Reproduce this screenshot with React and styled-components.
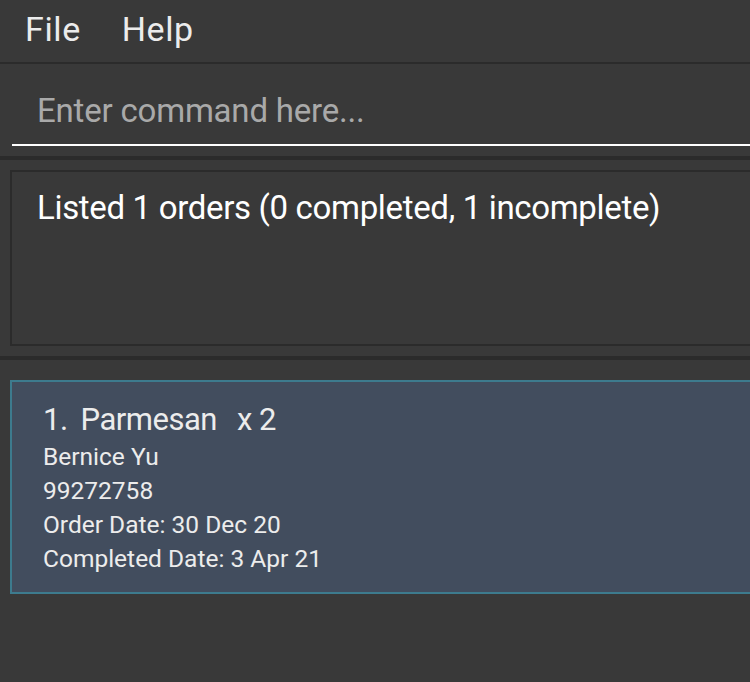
import React from "react";
import styled, { createGlobalStyle } from "styled-components";

const Global = createGlobalStyle`
  html, body { margin: 0; padding: 0; background: #393939; }
  body { font-family: Roboto, "Liberation Sans", sans-serif; overflow: hidden; }
  #root { width: 750px; height: 682px; }
`;

const Window = styled.div`
  width: 750px;
  height: 682px;
  display: flex;
  flex-direction: column;
  background: #393939;
  overflow: hidden;
`;

const MenuBar = styled.div`
  height: 62px;
  box-sizing: border-box;
  display: flex;
  align-items: center;
  padding: 0 0 4px 25px;
  gap: 41px;
  border-bottom: 2px solid #2b2b2b;
  height: 64px;
`;

const MenuItem = styled.span`
  color: #ececec;
  font-size: 34px;
  line-height: 1;
  letter-spacing: 0.6px;
`;

const CommandArea = styled.div`
  display: flex;
  flex-direction: column;
  justify-content: flex-end;
  padding: 0 0 10px 12px;
  border-bottom: 4px solid #2b2b2b;
  box-sizing: border-box;
  height: 96px;
`;

const CommandInput = styled.div`
  color: #a9a9a9;
  font-size: 33px;
  padding: 0 0 17px 25px;
  border-bottom: 2px solid #ffffff;
  line-height: 1;
  letter-spacing: -0.2px;
`;

const ResultArea = styled.div`
  height: 200px;
  box-sizing: border-box;
  padding: 10px 0 10px 10px;
  border-bottom: 4px solid #2b2b2b;
  display: flex;
`;

const ResultBox = styled.div`
  flex: 1;
  border: 2px solid #2b2b2b;
  border-right: none;
  padding: 18px 0 0 25px;
  color: #ffffff;
  font-size: 33px;
  letter-spacing: -0.33px;
  line-height: 1.1;
`;

const ListArea = styled.div`
  flex: 1;
  padding: 20px 0 0 10px;
`;

const Card = styled.div`
  height: 214px;
  box-sizing: border-box;
  background: #424d5e;
  border: 2px solid #3d7b8e;
  border-right: none;
  padding: 20px 0 0 31px;
  color: #ececec;
`;

const Title = styled.div`
  display: flex;
  font-size: 31px;
  line-height: 36px;
  letter-spacing: -0.5px;
  margin-bottom: 2px;
`;

const Gap = styled.span`
  margin-left: ${(p) => p.$w}px;
`;

const Line = styled.div`
  font-size: 24.5px;
  line-height: 34px;
  letter-spacing: 0;
`;

export default function App() {
  return (
    <>
      <Global />
      <Window>
        <MenuBar>
          <MenuItem>File</MenuItem>
          <MenuItem>Help</MenuItem>
        </MenuBar>
        <CommandArea>
          <CommandInput>Enter command here...</CommandInput>
        </CommandArea>
        <ResultArea>
          <ResultBox>Listed 1 orders (0 completed, 1 incomplete)</ResultBox>
        </ResultArea>
        <ListArea>
          <Card>
            <Title>
              <span>1.</span>
              <Gap $w={13}>Parmesan</Gap>
              <Gap $w={20}>x 2</Gap>
            </Title>
            <Line>Bernice Yu</Line>
            <Line>99272758</Line>
            <Line>Order Date: 30 Dec 20</Line>
            <Line>Completed Date: 3 Apr 21</Line>
          </Card>
        </ListArea>
      </Window>
    </>
  );
}
